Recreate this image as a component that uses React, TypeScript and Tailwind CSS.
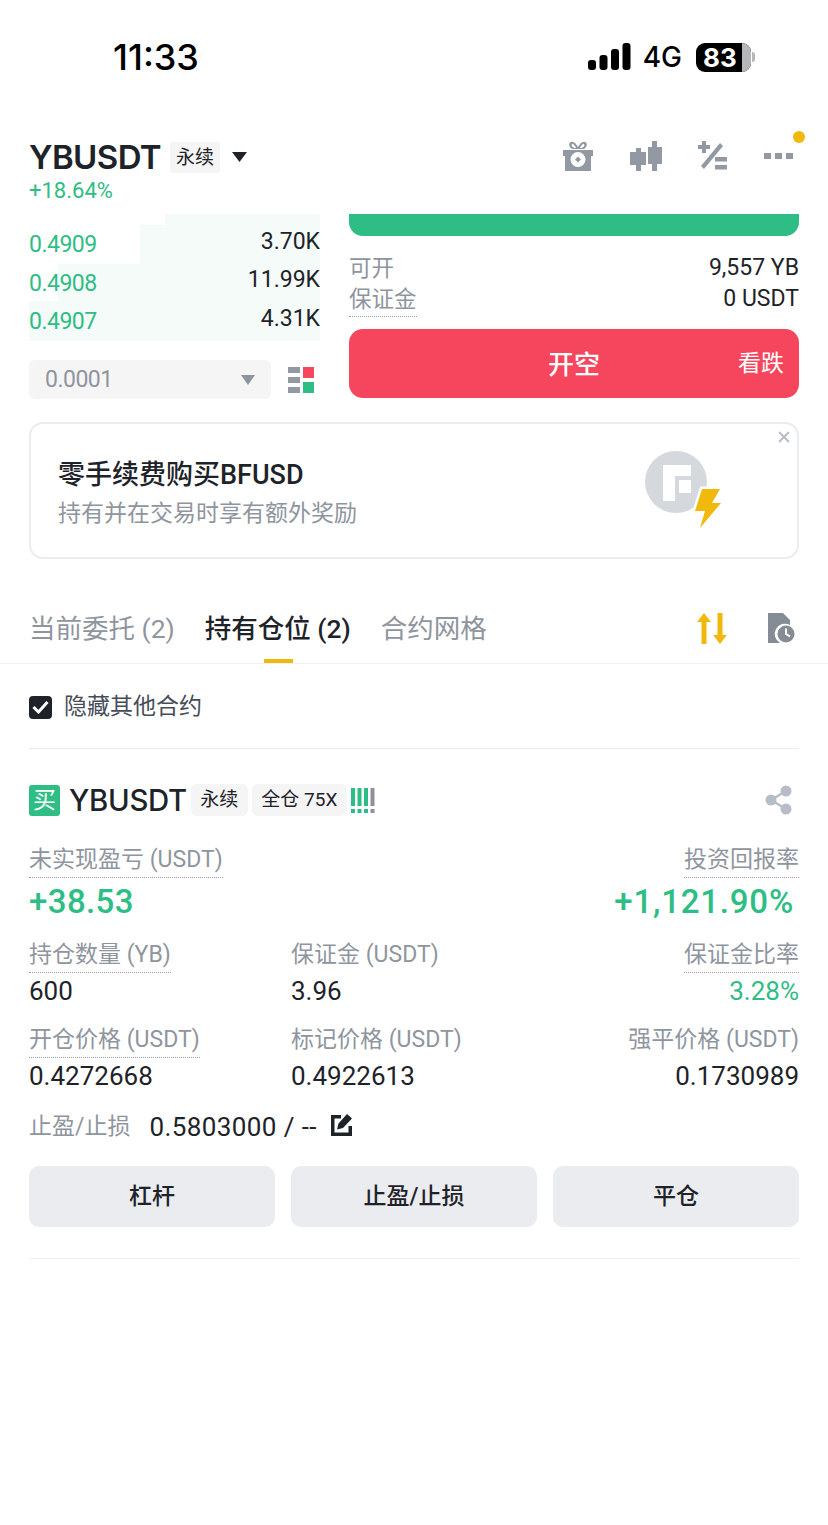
const FONT = "font-['Roboto','Noto_Sans_CJK_SC',sans-serif]"

function Dotted({ children, className = '' }: { children: React.ReactNode; className?: string }) {
  return <span className={`inline-block border-b border-dotted border-[#9aa0a8] pb-[4px] leading-[26px] ${className}`}>{children}</span>
}

function Stat({ label, value, dotted, right, green }: { label: string; value: string; dotted?: boolean; right?: boolean; green?: boolean }) {
  return (
    <div className={`flex flex-col ${right ? 'items-end' : 'items-start'}`}>
      {dotted ? (
        <Dotted className="text-[23px] text-[#8f959e]">{label}</Dotted>
      ) : (
        <span className="text-[23px] leading-[26px] pb-[5px] text-[#8f959e]">{label}</span>
      )}
      <span className={`mt-[2px] text-[26px] leading-[32px] ${green ? 'text-[#2ebd85]' : 'text-[#1e2329]'}`}>{value}</span>
    </div>
  )
}

function BookRow({ price, size, height, barLeft, priceTop, sizeTop }: { price: string; size: string; height: string; barLeft: string; priceTop: string; sizeTop: string }) {
  return (
    <div className={`relative flex justify-between ${height}`}>
      <div className={`absolute top-0 bottom-0 right-0 bg-[#f4fbf8] ${barLeft}`} />
      <span className={`relative text-[23px] leading-[32px] tracking-[-0.5px] text-[#2ebd85] ${priceTop}`}>{price}</span>
      <span className={`relative text-[23px] leading-[32px] text-[#1e2329] ${sizeTop}`}>{size}</span>
    </div>
  )
}

export default function App() {
  return (
    <div className={`w-[828px] h-[1525px] overflow-hidden bg-white ${FONT}`}>
      {/* status bar */}
      <div className="h-[125px] relative">
        <div className="flex items-center justify-between pt-[37px] pl-[113px] pr-[73px]">
          <span className="text-[36px] leading-[40px] font-medium text-black font-['Inter',sans-serif]">11:33</span>
          <div className="flex items-center">
            <svg width="43" height="28" viewBox="0 0 43 28" className="mr-[12px]">
              <rect x="0" y="17" width="8" height="10" rx="3" fill="#000" />
              <rect x="11.500" y="12" width="8" height="15" rx="3" fill="#000" />
              <rect x="23" y="6" width="8" height="21" rx="3" fill="#000" />
              <rect x="34.500" y="0" width="8" height="27" rx="3" fill="#000" />
            </svg>
            <span className="text-[28px] leading-[32px] font-medium text-black font-['Inter',sans-serif] mr-[14px]">4G</span>
            <div className="relative w-[55px] h-[29px] rounded-[9px] bg-black overflow-hidden flex items-center pl-[7px]">
              <div className="absolute top-0 bottom-0 right-0 w-[9px] bg-[#b5b7b9]" />
              <span className="relative text-[26px] leading-[29px] font-bold text-white font-['Inter',sans-serif]">83</span>
            </div>
            <div className="w-[3px] h-[10px] ml-[1px] rounded-r-full bg-[#b5b7b9]" />
          </div>
        </div>
      </div>

      {/* header */}
      <div className="flex justify-between pl-[29px] pr-[35px] h-[89px]">
        <div>
          <div className="flex items-center h-[64px]">
            <span className="text-[33px] leading-[40px] font-semibold text-[#1e2329] font-['Inter',sans-serif] tracking-[-0.6px]">YBUSDT</span>
            <span className="ml-[9px] w-[50px] h-[31px] bg-[#f5f5f5] rounded-[3px] text-[19px] leading-[31px] text-center text-[#1e2329]">永续</span>
            <svg width="15" height="10" viewBox="0 0 15 10" className="ml-[12px]"><path d="M0 0h15L7.500 10z" fill="#1e2329" /></svg>
          </div>
          <div className="text-[22px] leading-[22px] -mt-[9px] text-[#2ebd85]">+18.64%</div>
        </div>
        <div className="relative flex items-start pt-[16px]">
          <svg width="30" height="30" viewBox="0 0 30 30" className="mr-[37px]" fill="#9299a2">
            <path d="M8 1c3-1 5 2 7 5 2-3 4-6 7-5 3 1 2 5-1 7H9C6 6 5 2 8 1zm1 2c-1 1 0 3 2 4h2c-1-2-3-5-4-4zm12 0c-1-1-3 2-4 4h2c2-1 3-3 2-4z" />
            <path fillRule="evenodd" d="M0 9h30v6h-2v15H2V15H0zm15 2a7.500 7.500 0 1 0 0 15 7.500 7.500 0 0 0 0-15z" />
            <circle cx="15" cy="18.500" r="5" fill="#fff" />
            <path d="M15 15.500l3 3-3 3-3-3z" />
          </svg>
          <svg width="33" height="30" viewBox="0 0 33 30" className="mr-[35px]" fill="#9299a2">
            <rect x="6" y="7" width="5" height="23" />
            <rect x="0" y="11" width="16" height="13" />
            <rect x="22" y="0" width="5" height="30" />
            <rect x="18" y="6" width="14" height="17" />
          </svg>
          <svg width="29" height="29" viewBox="0 0 29 29" className="mr-[37px]" fill="#9299a2">
            <path d="M4 0h4v4h4v4H8v4H4V8H0V4h4z" />
            <path d="M22 2l3 3L6 28l-3-3z" />
            <rect x="17" y="16" width="12" height="4.500" />
            <rect x="17" y="24" width="12" height="4.500" />
          </svg>
          <div className="flex gap-[4px] mt-[12px] w-[29px]">
            <div className="w-[7px] h-[6px] bg-[#9299a2]" />
            <div className="w-[7px] h-[6px] bg-[#9299a2]" />
            <div className="w-[7px] h-[6px] bg-[#9299a2]" />
          </div>
          <div className="absolute right-[-12px] top-[6px] w-[12px] h-[12px] rounded-full bg-[#f0b90b]" />
        </div>
      </div>

      {/* order book and order form */}
      <div className="flex pl-[29px] pr-[29px]">
        <div className="w-[291px]">
          <div className="relative">
            <BookRow price="0.4909" size="3.70K" height="h-[50px]" barLeft="left-[111px]" priceTop="mt-[15px]" sizeTop="mt-[12px]" />
            <div className="absolute top-0 left-[111px] w-[25px] h-[11px] bg-white" />
          </div>
          <BookRow price="0.4908" size="11.99K" height="h-[37px]" barLeft="left-[29px]" priceTop="mt-[4px]" sizeTop="mt-0" />
          <BookRow price="0.4907" size="4.31K" height="h-[40px]" barLeft="left-0" priceTop="mt-[5px]" sizeTop="mt-[2px]" />
          <div className="flex items-center mt-[19px]">
            <div className="w-[242px] h-[39px] rounded-[6px] bg-[#f5f5f5] flex items-center justify-between pl-[16px] pr-[16px]">
              <span className="mt-[1px] text-[23px] tracking-[-0.5px] text-[#8f959e]">0.0001</span>
              <svg width="14" height="10" viewBox="0 0 14 10"><path d="M0 0h14L7 10z" fill="#8f959e" /></svg>
            </div>
            <div className="ml-[17px] grid grid-cols-2 gap-[3px] w-[26px]">
              <div className="flex flex-col gap-[4px]">
                <div className="h-[6px] bg-[#9299a2]" />
                <div className="h-[6px] bg-[#9299a2]" />
                <div className="h-[6px] bg-[#9299a2]" />
              </div>
              <div className="flex flex-col gap-[4px]">
                <div className="h-[11px] bg-[#f6465d]" />
                <div className="h-[11px] bg-[#2ebd85]" />
              </div>
            </div>
          </div>
        </div>
        <div className="ml-[29px] w-[450px]">
          <div className="h-[22px] rounded-b-[14px] bg-[#2ebd85]" />
          <div className="flex justify-between mt-[17px] h-[30px] text-[23px] leading-[30px]">
            <span className="text-[22.500px] text-[#8f959e]">可开</span>
            <span className="text-[#1e2329]">9,557 YB</span>
          </div>
          <div className="flex justify-between mt-[1px] text-[23px] leading-[30px]">
            <span className="text-[22.500px] border-b border-dotted border-[#9aa0a8] h-[33px] text-[#8f959e]">保证金</span>
            <span className="text-[#1e2329]">0 USDT</span>
          </div>
          <div className="relative mt-[12px] h-[69px] rounded-[14px] bg-[#f6465d] flex items-center justify-center text-white">
            <span className="text-[26px] font-medium mt-[3px]">开空</span>
            <span className="absolute right-[15px] mt-[2px] text-[23px]">看跌</span>
          </div>
        </div>
      </div>

      {/* promo card */}
      <div className="relative mx-[29px] mt-[23px] h-[137px] rounded-[14px] border-2 border-[#eaecef] flex items-center justify-between pl-[27px] pr-[74px]">
        <div className="mt-[6px]">
          <div className="text-[27px] leading-[34px] font-medium text-[#1e2329]">零手续费购买BFUSD</div>
          <div className="mt-[7px] text-[23px] leading-[30px] text-[#8f959e]">持有并在交易时享有额外奖励</div>
        </div>
        <svg width="78" height="78" viewBox="0 0 78 78" className="-mt-[2px]">
          <circle cx="31" cy="31" r="31" fill="#d5d8dc" />
          <path d="M18 14h28v11H30v25H18z" fill="#fff" />
          <rect x="34" y="29" width="12" height="13" fill="#fff" />
          <path d="M57 38h18l-8 14h9L55 77l5-17H50z" fill="#f0b90b" stroke="#fff" strokeWidth="5" paintOrder="stroke" />
        </svg>
        <svg width="12" height="12" viewBox="0 0 12 12" className="absolute right-[7px] top-[7px]" stroke="#b7bdc6" strokeWidth="2"><path d="M1 1l10 10M11 1L1 11" /></svg>
      </div>

      {/* tabs */}
      <div className="relative mt-[47px] h-[58px] border-b border-[#f0f1f2] flex pl-[29px] pr-[33px]">
        <span className="text-[26.500px] leading-[46px] text-[#8f959e]">当前委托 (2)</span>
        <div className="relative ml-[30px]">
          <span className="text-[26.500px] leading-[46px] font-medium text-[#1e2329]">持有仓位 (2)</span>
          <div className="absolute left-[59px] bottom-0 w-[29px] h-[4px] bg-[#f0b90b]" />
        </div>
        <span className="ml-[30px] text-[26.500px] leading-[46px] text-[#8f959e]">合约网格</span>
        <div className="ml-auto flex items-start pt-[7px]">
          <svg width="30" height="31" viewBox="0 0 30 31" fill="#f0b90b" className="mr-[41px]">
            <path d="M7 0l7 9h-4.500v22h-5V9H0z" />
            <path d="M23 31l7-9h-4.500V0h-5v22H16z" />
          </svg>
          <svg width="27" height="30" viewBox="0 0 27 30" fill="#868c95">
            <path d="M0 0h15l7 7v5a10 10 0 0 0-10 18H0z" />
            <circle cx="18" cy="21" r="8.500" />
            <path d="M17 15.500h2v5l3.500 2-1 1.700-4.500-2.700z" fill="#fff" />
          </svg>
        </div>
      </div>

      {/* hide other contracts */}
      <div className="mx-[29px] h-[85px] pt-[2px] border-b border-[#eaecef] flex items-center">
        <div className="w-[23px] h-[23px] rounded-[4px] bg-[#1e2329] flex items-center justify-center">
          <svg width="17" height="14" viewBox="0 0 17 14" fill="none" stroke="#fff" strokeWidth="3"><path d="M1.500 7l5 5 9-10" /></svg>
        </div>
        <span className="ml-[12px] text-[23px] text-[#474d57]">隐藏其他合约</span>
      </div>

      {/* position */}
      <div className="mx-[29px] pt-[34px] h-[510px] border-b border-[#f0f1f2]">
        <div className="flex items-center h-[34px]">
          <div className="w-[31px] h-[31px] rounded-[3px] bg-[#2ebd85] text-white text-[23px] leading-[31px] text-center">买</div>
          <span className="ml-[9px] mt-[1px] text-[29.300px] font-medium text-[#1e2329] font-['Inter',sans-serif] tracking-[-0.3px]">YBUSDT</span>
          <span className="ml-[4px] w-[57px] h-[32px] bg-[#f5f5f5] rounded-[6px] text-[19px] leading-[32px] text-center text-[#1e2329]">永续</span>
          <span className="ml-[4px] w-[95px] h-[32px] bg-[#f5f5f5] rounded-[6px] text-[19px] leading-[32px] text-center text-[#1e2329]">全仓 75X</span>
          <svg width="24" height="25" viewBox="0 0 24 25" className="ml-[4px]">
            <rect x="0" y="0" width="4" height="18" fill="#2ebd85" /><rect x="0" y="21" width="4" height="4" fill="#2ebd85" />
            <rect x="6.500" y="0" width="4" height="18" fill="#2ebd85" /><rect x="6.500" y="21" width="4" height="4" fill="#2ebd85" />
            <rect x="13" y="0" width="4" height="18" fill="#2ebd85" /><rect x="13" y="21" width="4" height="4" fill="#2ebd85" />
            <rect x="19.500" y="0" width="4" height="18" fill="#8f8f9e" /><rect x="19.500" y="21" width="4" height="4" fill="#8f8f9e" />
          </svg>
          <svg width="30" height="30" viewBox="0 0 30 30" className="ml-auto mr-[5px]" fill="#b7bdc6">
            <circle cx="22" cy="6" r="5.500" /><circle cx="22" cy="24" r="5.500" /><circle cx="7" cy="15" r="5.500" />
            <path d="M7 15l15-9M7 15l15 9" stroke="#b7bdc6" strokeWidth="2.500" />
          </svg>
        </div>

        <div className="flex justify-between mt-[30px]">
          <Dotted className="text-[23px] text-[#8f959e]">未实现盈亏 (USDT)</Dotted>
          <Dotted className="text-[23px] text-[#8f959e]">投资回报率</Dotted>
        </div>
        <div className="flex justify-between mt-[3px]">
          <span className="text-[33px] leading-[42px] font-medium tracking-[0.4px] text-[#2ebd85]">+38.53</span>
          <span className="text-[33px] leading-[42px] font-medium tracking-[0.8px] text-[#2ebd85] pr-[5px]">+1,121.90%</span>
        </div>

        <div className="grid grid-cols-[262px_1fr_auto] mt-[19px]">
          <Stat label="持仓数量 (YB)" value="600" dotted />
          <Stat label="保证金 (USDT)" value="3.96" />
          <Stat label="保证金比率" value="3.28%" dotted right green />
        </div>
        <div className="grid grid-cols-[262px_1fr_auto] mt-[20px]">
          <Stat label="开仓价格 (USDT)" value="0.4272668" dotted />
          <Stat label="标记价格 (USDT)" value="0.4922613" />
          <Stat label="强平价格 (USDT)" value="0.1730989" right />
        </div>

        <div className="flex items-center mt-[18px] h-[34px]">
          <span className="text-[23px] text-[#8f959e]">止盈/止损</span>
          <span className="ml-[19px] text-[26px] tracking-[0.4px] text-[#1e2329]">0.5803000 / --</span>
          <svg width="22" height="22" viewBox="0 0 22 22" className="ml-[14px] mb-[4px]" fill="#1e2329">
            <path d="M0 1h10v3.500H3.500v14h14V12H21v10H0z" />
            <path d="M16 0l5 4.500-9 9.500-6 1.500 1.500-6z" />
          </svg>
        </div>

        <div className="grid grid-cols-3 gap-[16px] mt-[22px]">
          <div className="h-[61px] rounded-[10px] bg-[#eaecef] text-center text-[23px] leading-[61px] font-medium text-[#1e2329]">杠杆</div>
          <div className="h-[61px] rounded-[10px] bg-[#eaecef] text-center text-[23px] leading-[61px] font-medium text-[#1e2329]">止盈/止损</div>
          <div className="h-[61px] rounded-[10px] bg-[#eaecef] text-center text-[23px] leading-[61px] font-medium text-[#1e2329]">平仓</div>
        </div>
      </div>
    </div>
  )
}
